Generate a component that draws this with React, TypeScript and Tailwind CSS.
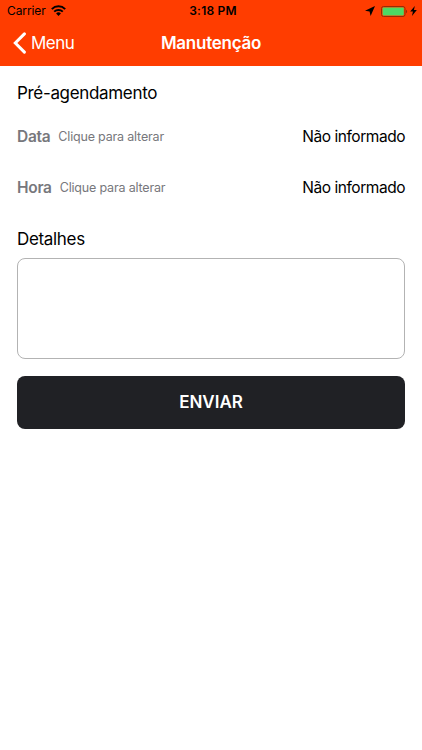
import type { ReactNode } from "react";

interface PickerRowProps {
	label: string;
	value: string;
}

function StatusBar() {
	return (
		<div className="grid h-[22px] grid-cols-[1fr_auto_1fr] items-center pl-[7px] pr-[5px] text-black">
			<div className="flex items-center gap-[5px]">
				<span className="text-[12px] leading-none tracking-[-0.1px]">Carrier</span>
				<svg className="-mt-[1px] h-[11px] w-[15px]" viewBox="0 0 15 11" fill="none">
					<path d="M.8 4.1a9.5 9.5 0 0 1 13.4 0" stroke="currentColor" strokeWidth="2" />
					<path d="M3.2 6.7a6.1 6.1 0 0 1 8.6 0" stroke="currentColor" strokeWidth="1.9" />
					<path d="M7.5 10.9 5.1 8.5a3.4 3.4 0 0 1 4.8 0z" fill="currentColor" />
				</svg>
			</div>
			<span className="pl-[2px] text-center text-[12px] font-semibold leading-none tracking-[0.2px]">
				3:18 PM
			</span>
			<div className="flex items-center justify-end">
				<svg className="h-[10px] w-[10px]" viewBox="0 0 10 10" fill="currentColor">
					<path d="M10 0 5.6 10 4.6 5.4 0 4.8z" />
				</svg>
				<svg className="ml-[6px] h-[11px] w-[27px]" viewBox="0 0 27 11">
					<rect x=".5" y=".5" width="23.5" height="10" rx="2" fill="none" stroke="#982a05" />
					<rect x="1.6" y="1.6" width="21.2" height="7.8" rx=".8" fill="#4cd964" />
					<path d="M25 3.8c1.5.5 1.5 2.9 0 3.4z" fill="#982a05" />
				</svg>
				<svg className="ml-[2px] h-[10px] w-[7px]" viewBox="0 0 6 9" fill="currentColor">
					<path d="M4.2 0 0 5h2.5L1.6 9 6 3.7H3.4z" />
				</svg>
			</div>
		</div>
	);
}

function NavBar() {
	return (
		<nav className="grid h-[43.5px] grid-cols-[1fr_auto_1fr] items-center px-[13px] text-white">
			<button type="button" className="flex items-center gap-[4px]">
				<svg className="-mt-[1px] h-[22px] w-[14px]" viewBox="0 0 14 22" fill="none">
					<path
						d="M11.4 1.9 2.3 11l9.1 9.1"
						stroke="currentColor"
						strokeWidth="3"
						strokeLinecap="round"
					/>
				</svg>
				<span className="text-[17px] leading-none tracking-[-0.5px]">Menu</span>
			</button>
			<h1 className="text-[17px] font-semibold leading-none tracking-[-0.25px]">Manutenção</h1>
		</nav>
	);
}

function SectionTitle({ children }: { children: ReactNode }) {
	return <h2 className="text-[17px] leading-6 tracking-[-0.33px] text-black">{children}</h2>;
}

function PickerRow({ label, value }: PickerRowProps) {
	return (
		<div className="flex h-[51px] items-center leading-5">
			<span className="pt-[2px] text-[15.5px] font-semibold tracking-[-0.3px] text-[#77777c]">
				{label}
			</span>
			<span className="ml-[8px] pt-[1px] text-[12.5px] tracking-[-0.18px] text-[#77777c]">
				Clique para alterar
			</span>
			<span className="ml-auto pt-[2px] text-[15.5px] tracking-[-0.46px] text-black">{value}</span>
		</div>
	);
}

export default function App() {
	return (
		<div className="h-[750px] w-[422px] overflow-hidden bg-white font-['Inter',sans-serif]">
			<header className="h-[65.5px] bg-[#ff3d00]">
				<StatusBar />
				<NavBar />
			</header>
			<main className="px-[17px] pt-[15.5px]">
				<SectionTitle>Pré-agendamento</SectionTitle>
				<div className="mt-[5.5px]">
					<PickerRow label="Data" value="Não informado" />
					<PickerRow label="Hora" value="Não informado" />
				</div>
				<div className="mt-[14.5px]">
					<SectionTitle>Detalhes</SectionTitle>
				</div>
				<textarea
					aria-label="Detalhes"
					className="mt-[7px] block h-[101px] w-full resize-none rounded-[8px] border border-[#b3b3b3] outline-none"
				/>
				<button
					type="button"
					className="mt-[16.5px] h-[53px] w-full rounded-[8px] bg-[#202125] pt-[2px] text-[17px] font-semibold text-white"
				>
					ENVIAR
				</button>
			</main>
		</div>
	);
}
